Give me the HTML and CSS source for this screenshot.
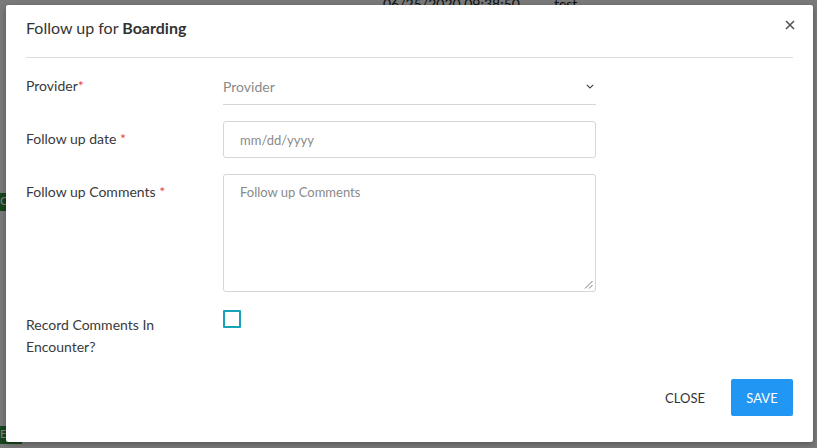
FILE: index.html
```html
<!DOCTYPE html>
<html>
<head>
<meta charset="utf-8">
<link rel="stylesheet" href="styles.css">
</head>
<body>
<div class="page">
  <div class="topbar"><span class="ts">06/25/2020 09:38:50</span><span class="tt">test</span></div>
  <div class="tag tag1">C</div>
  <div class="tag tag2">E</div>
</div>
<div class="backdrop"></div>
<div class="modal">
  <div class="modal-header">
    <h1 class="title">Follow up for <b>Boarding</b></h1>
    <button class="x" aria-label="close"><svg width="10" height="10" viewBox="0 0 10 10"><path d="M1 1L9 9M9 1L1 9" stroke="#555" stroke-width="1.6"/></svg></button>
  </div>
  <div class="modal-body">
    <div class="row">
      <label class="lbl">Provider<span class="req">*</span></label>
      <div class="select"><span>Provider</span><svg width="8" height="5" viewBox="0 0 8 5"><path d="M0.8 0.8L4 4L7.2 0.8" fill="none" stroke="#444" stroke-width="1.1"/></svg></div>
    </div>
    <div class="row">
      <label class="lbl">Follow up date <span class="req">*</span></label>
      <div class="input"><span>mm/dd/yyyy</span></div>
    </div>
    <div class="row">
      <label class="lbl">Follow up Comments <span class="req">*</span></label>
      <div class="textarea"><span>Follow up Comments</span>
        <svg class="grip" width="9" height="9" viewBox="0 0 9 9"><path d="M8.5 1L1 8.5M8.5 5L5 8.5" stroke="#777" stroke-width="1"/></svg>
      </div>
    </div>
    <div class="row row-check">
      <label class="lbl lbl-check">Record Comments In<br>Encounter?</label>
      <div class="checkbox"></div>
    </div>
  </div>
  <div class="modal-footer">
    <button class="btn btn-text">CLOSE</button>
    <button class="btn btn-primary">SAVE</button>
  </div>
</div>
</body>
</html>
```
FILE: styles.css
```css
* { box-sizing: border-box; }
html, body { margin: 0; padding: 0; }
body {
  width: 817px; height: 448px; overflow: hidden;
  font-family: Lato, "Liberation Sans", sans-serif;
  background: #ffffff;
  position: relative;
}
.page { width: 817px; height: 448px; background: #f4f4f4; }
.topbar { height: 40px; display: flex; gap: 34px; padding-left: 383px; padding-top: 0; font-size: 14px; color: #222; line-height: 8px; }
.tag { position: absolute; left: 0; width: 22px; height: 18px; background: #2e8b3a; color: #fff; font-size: 12px; }
.tag1 { top: 193px; }
.tag2 { top: 426px; }
.backdrop { position: absolute; inset: 0; background: rgba(0,0,0,0.5); }
.modal {
  position: absolute; left: 6px; top: 5px; width: 807px; height: 437px;
  background: #fff; border-radius: 2px;
  box-shadow: 0 2px 6px rgba(0,0,0,0.3);
  padding: 0 20px;
  display: flex; flex-direction: column;
  color: #333;
}
.modal-header {
  height: 53px; border-bottom: 1px solid #dcdcdc;
  display: flex; align-items: flex-start; justify-content: space-between;
  padding-top: 14px;
}
.title { margin: 0; font-size: 16px; line-height: 18px; font-weight: 400; color: #333; }
.title b { font-weight: 700; }
.x { border: 0; background: none; padding: 0; margin-right: -2px; display: flex; margin-top: 1px; }
.modal-body { padding-top: 10px; display: flex; flex-direction: column; gap: 16px; }
.row { display: flex; }
.lbl { width: 197px; font-size: 14px; line-height: 20px; padding-top: 8px; color: #3a3a3a; }
.req { color: #e04848; }
.select {
  width: 373px; height: 37px; border-bottom: 1px solid #d6d6d6;
  display: flex; align-items: center; justify-content: space-between;
  font-size: 14px; color: #8a8a8a; padding-right: 2px;
}
.input {
  width: 373px; height: 37px; border: 1px solid #d6d6d6; border-radius: 3px;
  display: flex; align-items: center; padding-left: 16px;
  font-size: 13px; color: #8a8a8a;
}
.textarea {
  width: 373px; height: 118px; border: 1px solid #d6d6d6; border-radius: 3px;
  padding: 9px 16px; font-size: 13px; color: #8a8a8a; position: relative;
}
.grip { position: absolute; right: 2px; bottom: 2px; }
.row-check { margin-top: 2px; }
.lbl-check { line-height: 22px; padding-top: 4px; }
.checkbox { width: 18px; height: 18px; border: 2px solid #17a2b8; border-radius: 1px; }
.modal-footer { margin-top: auto; display: flex; justify-content: flex-end; align-items: center; gap: 10px; padding-bottom: 26px; }
.btn { font-family: inherit; font-size: 13px; border: 0; height: 37px; border-radius: 2px; cursor: pointer; }
.btn-text { background: none; color: #333; padding: 0 16px; }
.btn-primary { background: #2196f3; color: #fff; width: 62px; }
```
